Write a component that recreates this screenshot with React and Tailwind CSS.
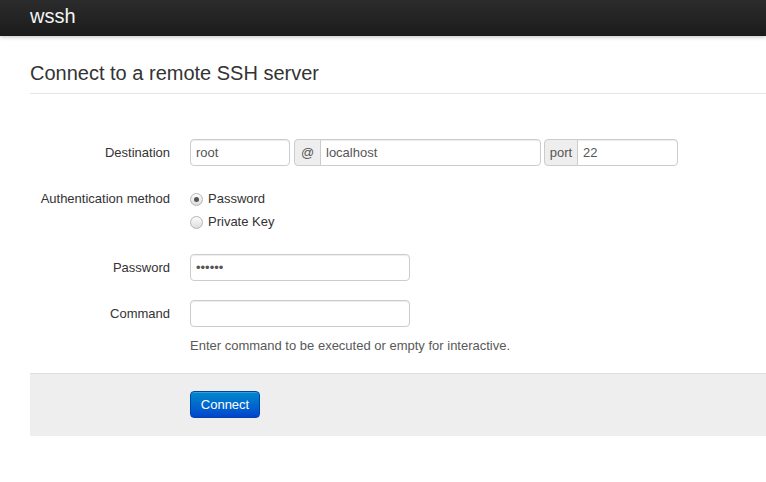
const Field = ({ label, children, align = 'center', className = '' }) => (
  <div className={`flex ${align === 'center' ? 'items-center' : 'items-start'} ${className}`}>
    <label className="w-[140px] shrink-0 text-right text-[13px] leading-5 text-[#333]">{label}</label>
    <div className="ml-[20px] flex-1">{children}</div>
  </div>
);

const inputCls =
  'h-[27px] border border-[#ccc] bg-white px-[5px] text-[13px] text-[#555] shadow-[inset_0_1px_1px_rgba(0,0,0,0.075)] outline-none';

const Radio = ({ checked, label }) => (
  <div className="flex h-5 items-center">
    <span className="flex h-[13px] w-[13px] items-center justify-center rounded-full border border-[#b5b5b5] bg-gradient-to-b from-[#fdfdfd] to-[#dcdcdc]">
      {checked && <span className="h-[5px] w-[5px] rounded-full bg-[#555]" />}
    </span>
    <span className="ml-[5px] text-[13px] text-[#333]">{label}</span>
  </div>
);

export default function App() {
  return (
    <div className="min-h-screen bg-white font-['Liberation_Sans',Arial,sans-serif]">
      <div className="h-[36px] bg-gradient-to-b from-[#2c2c2c] to-[#1b1b1b] shadow-[0_1px_4px_rgba(0,0,0,0.25)]">
        <div className="pl-[30px] text-[20px] leading-[32px] text-[#f5f5f5]">wssh</div>
      </div>

      <div className="pl-[30px]">
        <h1 className="mt-[17px] border-b border-[#e5e5e5] text-[20px] leading-[40px] text-[#333]">
          Connect to a remote SSH server
        </h1>

        <form className="mt-[45px]">
          <Field label="Destination">
            <div className="flex items-center">
              <input className={`${inputCls} w-[100px] rounded-[4px]`} defaultValue="root" />
              <span className="ml-[4px] flex h-[27px] w-[27px] items-center justify-center rounded-l-[4px] border border-[#ccc] bg-[#eee] text-[13px] text-[#555]">
                @
              </span>
              <input className={`${inputCls} -ml-px w-[221px] rounded-r-[4px]`} defaultValue="localhost" />
              <span className="ml-[3px] flex h-[27px] w-[34px] items-center justify-center rounded-l-[4px] border border-[#ccc] bg-[#eee] text-[13px] text-[#555]">
                port
              </span>
              <input className={`${inputCls} -ml-px w-[101px] rounded-r-[4px]`} defaultValue="22" />
            </div>
          </Field>

          <Field label="Authentication method" align="start" className="mt-[23px]">
            <div className="flex flex-col gap-[3px]">
              <Radio checked label="Password" />
              <Radio label="Private Key" />
            </div>
          </Field>

          <Field label="Password" className="mt-[22px]">
            <input type="password" className={`${inputCls} w-[220px] rounded-[4px]`} defaultValue="secret" />
          </Field>

          <Field label="Command" className="mt-[19px]">
            <input className={`${inputCls} w-[220px] rounded-[4px]`} />
          </Field>
          <div className="ml-[160px] mt-[9px] text-[13px] leading-[20px] text-[#595959]">
            Enter command to be executed or empty for interactive.
          </div>

          <div className="mt-[17px] border-t border-[#ddd] bg-[#eee] pb-[18px] pl-[160px] pt-[17px]">
            <button
              type="button"
              className="h-[27px] w-[70px] rounded-[4px] border border-[#0044aa] bg-gradient-to-b from-[#0088cc] to-[#0044cc] text-[13px] text-white shadow-[inset_0_1px_0_rgba(255,255,255,0.2)]"
            >
              Connect
            </button>
          </div>
        </form>
      </div>
    </div>
  );
}
